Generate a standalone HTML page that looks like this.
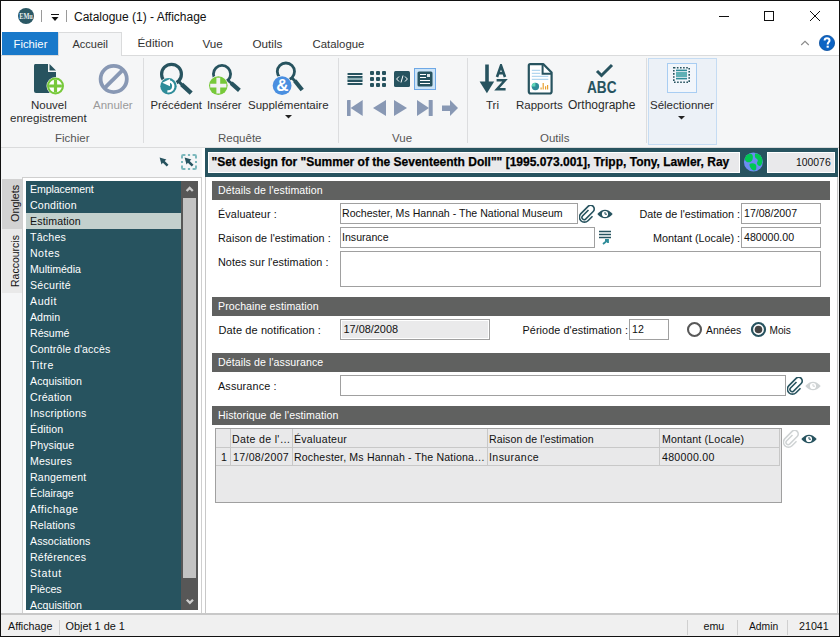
<!DOCTYPE html>
<html><head><meta charset="utf-8">
<style>
*{margin:0;padding:0;box-sizing:border-box}
html,body{width:840px;height:637px;overflow:hidden;background:#fff}
body{position:relative;font-family:"Liberation Sans",sans-serif;color:#000}
.a{position:absolute}
.t{position:absolute;white-space:nowrap;line-height:1}
</style></head><body>
<!-- window frame -->


<!-- title bar -->
<svg class="a" style="left:18px;top:8px" width="16" height="16" viewBox="0 0 16 16">
  <circle cx="8" cy="8" r="8" fill="#2b5865"/>
  <text x="1.2" y="11" textLength="13.6" lengthAdjust="spacingAndGlyphs" font-family="Liberation Serif" font-weight="bold" font-size="7.4" fill="#e8eef0">EMu</text>
</svg>
<div class="a" style="left:41px;top:10px;width:1px;height:12px;background:#9a9a9a"></div>
<div class="a" style="left:51px;top:14px;width:8px;height:1px;background:#111"></div>
<svg class="a" style="left:51px;top:17px" width="8" height="5"><path d="M0.5 0H7.5L4 4Z" fill="#111"/></svg>
<div class="a" style="left:66px;top:10px;width:1px;height:12px;background:#9a9a9a"></div>
<div class="t" style="left:74px;top:11px;font-size:12px;color:#111">Catalogue (1) - Affichage</div>
<!-- window controls -->
<div class="a" style="left:719px;top:16px;width:10px;height:1px;background:#111"></div>
<div class="a" style="left:764px;top:11px;width:10px;height:10px;border:1px solid #111"></div>
<svg class="a" style="left:809px;top:10px" width="12" height="12"><path d="M1 1L11 11M11 1L1 11" stroke="#111" stroke-width="1"/></svg>

<!-- ribbon tabs -->
<div class="a" style="left:2px;top:32px;width:56px;height:23px;background:#1979ca"></div>
<div class="t" style="left:13.5px;top:39px;font-size:11.3px;color:#fff">Fichier</div>
<div class="a" style="left:58px;top:32px;width:64px;height:24px;background:#f5f6f7;border:1px solid #dadbdc;border-bottom:none"></div>
<div class="a" style="left:1px;top:55px;width:838px;height:1px;background:#dadbdc"></div>
<div class="a" style="left:59px;top:55px;width:62px;height:1px;background:#f5f6f7"></div>
<div class="t" style="left:72.5px;top:39px;font-size:11px;color:#333">Accueil</div>
<div class="t" style="left:137.5px;top:38px;font-size:11.8px;color:#333">Édition</div>
<div class="t" style="left:202.5px;top:38px;font-size:11.7px;color:#333">Vue</div>
<div class="t" style="left:252.5px;top:38px;font-size:11.7px;color:#333">Outils</div>
<div class="t" style="left:312.5px;top:39px;font-size:11.4px;color:#333">Catalogue</div>
<svg class="a" style="left:800px;top:39px" width="11" height="8"><path d="M1.2 6L5 2.3L8.8 6" stroke="#8a8a8a" stroke-width="1.1" fill="none"/></svg>
<svg class="a" style="left:819px;top:35px" width="16" height="16" viewBox="0 0 16 16">
  <circle cx="8" cy="8" r="7.6" fill="#0d64c4" stroke="#0a4f9e" stroke-width="0.8"/>
  <path d="M5.6 5.6C5.6 4 6.6 3.2 8 3.2C9.5 3.2 10.5 4.1 10.5 5.4C10.5 6.9 8.8 7.2 8.7 9V9.4" fill="none" stroke="#fff" stroke-width="2"/>
  <rect x="7.6" y="10.7" width="2.2" height="2" fill="#fff"/>
</svg>

<!-- ribbon body -->
<div class="a" style="left:1px;top:56px;width:838px;height:91px;background:#f5f6f7"></div>
<div class="a" style="left:1px;top:147px;width:838px;height:1px;background:#dadbdc"></div>


<!-- ===== RIBBON CONTENT ===== -->
<!-- Fichier group -->
<svg class="a" style="left:33px;top:63px" width="34" height="33" viewBox="0 0 34 33">
  <path d="M2 1H15V9H23V25A2 2 0 0 1 21 30H3A2 2 0 0 1 1 28V3A2 2 0 0 1 2 1Z" fill="#27535f"/>
  <path d="M16.5 1L23 7.5H16.5Z" fill="#27535f"/>
  <circle cx="22.5" cy="23" r="9" fill="#f5f6f7"/>
  <circle cx="22.5" cy="23" r="7.5" fill="#fff" stroke="#77c93a" stroke-width="2"/>
  <path d="M22.5 16.6V29.4M16.1 23H28.9" stroke="#77c93a" stroke-width="3.2"/>
</svg>
<div class="t" style="left:31px;top:100px;font-size:11.5px;color:#2b2b2b">Nouvel</div>
<div class="t" style="left:10px;top:113px;font-size:11.5px;color:#2b2b2b">enregistrement</div>
<svg class="a" style="left:98px;top:64px" width="32" height="32" viewBox="0 0 32 32">
  <circle cx="15.7" cy="15" r="13.1" fill="none" stroke="#8898b4" stroke-width="3.8"/>
  <path d="M24.6 6.1L6.8 23.9" stroke="#8898b4" stroke-width="3.8"/>
</svg>
<div class="t" style="left:93px;top:100px;font-size:11.5px;color:#9a9a9a">Annuler</div>
<div class="t" style="left:55px;top:133px;font-size:11.5px;color:#555">Fichier</div>
<div class="a" style="left:143px;top:58px;width:1px;height:85px;background:#dcdddf"></div>

<!-- Requete group -->
<svg class="a" style="left:158px;top:60px" width="36" height="36" viewBox="0 0 36 36">
  <circle cx="13.5" cy="14.2" r="9.9" fill="none" stroke="#27535f" stroke-width="3.2"/>
  <path d="M20.4 21.1L24 24.7" stroke="#27535f" stroke-width="3"/>
  <path d="M23.6 24.3L33.2 33.2" stroke="#27535f" stroke-width="4.4"/>
  <circle cx="10.5" cy="26.3" r="9" fill="#f5f6f7"/>
  <circle cx="10.5" cy="26.3" r="8.2" fill="#2e8c99"/>
  <path d="M11.2 21.4A4.9 4.9 0 1 1 9.4 31.2" fill="none" stroke="#fff" stroke-width="2.4"/>
  <path d="M4.3 22.8L12 19V26.2Z" fill="#fff"/>
</svg>
<div class="t" style="left:150.5px;top:100px;font-size:11.3px;color:#2b2b2b">Précédent</div>
<svg class="a" style="left:208px;top:60px" width="36" height="36" viewBox="0 0 36 36">
  <circle cx="14" cy="14" r="8.6" fill="none" stroke="#27535f" stroke-width="2.8"/>
  <path d="M19.8 20.2L24 23.8" stroke="#27535f" stroke-width="2.8"/>
  <path d="M23.2 23.2L31.4 30.4" stroke="#27535f" stroke-width="4.2"/>
  <circle cx="10.3" cy="25.6" r="10" fill="#f5f6f7"/>
  <circle cx="10.3" cy="25.6" r="9.3" fill="#77c93a"/>
  <path d="M2.2 25.6H18.4M10.3 17.7V33.6" stroke="#f2f2f2" stroke-width="3.8"/>
</svg>
<div class="t" style="left:207px;top:100px;font-size:11.1px;color:#2b2b2b">Insérer</div>
<svg class="a" style="left:270px;top:60px" width="36" height="36" viewBox="0 0 36 36">
  <circle cx="15.9" cy="11.6" r="8.6" fill="none" stroke="#27535f" stroke-width="2.8"/>
  <path d="M21.8 17.8L25.5 21.5" stroke="#27535f" stroke-width="2.8"/>
  <path d="M24.8 20.8L32.2 30" stroke="#27535f" stroke-width="4.2"/>
  <circle cx="12.1" cy="25.7" r="10.1" fill="#f5f6f7"/>
  <circle cx="12.1" cy="25.7" r="9.4" fill="#4a8fe0"/>
  <text x="12.3" y="31.4" text-anchor="middle" font-family="Liberation Sans" font-weight="bold" font-size="17" fill="#fff">&amp;</text>
</svg>
<div class="t" style="left:248px;top:100px;font-size:11.5px;color:#2b2b2b">Supplémentaire</div>
<svg class="a" style="left:285px;top:115px" width="7" height="4"><path d="M0 0H7L3.5 3.5Z" fill="#222"/></svg>
<div class="t" style="left:218px;top:133px;font-size:11.5px;color:#555">Requête</div>
<div class="a" style="left:338px;top:58px;width:1px;height:85px;background:#dcdddf"></div>

<!-- Vue group -->
<svg class="a" style="left:347px;top:72px" width="16" height="14" viewBox="0 0 16 14">
  <rect x="0.3" y="0.9" width="15.4" height="2" rx="1" fill="#27535f"/>
  <rect x="0.3" y="3.9" width="15.4" height="2" rx="0.8" fill="#27535f"/>
  <rect x="0.3" y="5.9" width="15.4" height="2.4" fill="#8fb0b5"/>
  <rect x="0.3" y="8" width="15.4" height="2" rx="0.8" fill="#27535f"/>
  <rect x="0.3" y="11" width="15.4" height="2" rx="1" fill="#27535f"/>
</svg>
<svg class="a" style="left:370px;top:71px" width="16" height="16" viewBox="0 0 16 16">
  <g fill="#27535f">
  <rect x="0" y="0" width="4" height="4" rx="1"/><rect x="6" y="0" width="4" height="4" rx="1"/><rect x="12" y="0" width="4" height="4" rx="1"/>
  <rect x="0" y="6" width="4" height="4" rx="1"/><rect x="6" y="6" width="4" height="4" rx="1"/><rect x="12" y="6" width="4" height="4" rx="1"/>
  <rect x="0" y="12" width="4" height="4" rx="1"/><rect x="6" y="12" width="4" height="4" rx="1"/><rect x="12" y="12" width="4" height="4" rx="1"/>
  </g>
</svg>
<svg class="a" style="left:394px;top:71px" width="16" height="16" viewBox="0 0 16 16">
  <rect x="0" y="0" width="16" height="16" rx="1.5" fill="#27535f"/>
  <path d="M5 5.5L2.6 8L5 10.5M11 5.5L13.4 8L11 10.5M9 4.5L7 11.5" stroke="#fff" stroke-width="1" fill="none"/>
</svg>
<div class="a" style="left:414px;top:68px;width:22px;height:22px;background:#cce4f7;border:1px solid #6ea8e6"></div>
<svg class="a" style="left:417px;top:71px" width="16" height="16" viewBox="0 0 16 16">
  <rect x="0.5" y="0.5" width="15" height="15" rx="1.5" fill="#27535f"/>
  <path d="M3 3.5H9M3 6.5H9M3 9.5H13M3 12.5H13" stroke="#fff" stroke-width="1"/>
  <rect x="10" y="3" width="3" height="3" fill="#fff" opacity="0.85"/>
</svg>
<svg class="a" style="left:347px;top:100px" width="112" height="16" viewBox="0 0 112 16">
  <g fill="#8898b4">
  <rect x="0" y="0" width="3.6" height="16" rx="0.5"/><path d="M3.6 8L15.7 0V16Z"/>
  <path d="M26 8L39 0V16Z"/>
  <path d="M47 0L60 8L47 16Z"/>
  <path d="M70 0L82 8L70 16Z"/><rect x="81.7" y="0" width="4" height="16" rx="0.5"/>
  <path d="M95 5.4H103V0L111 8L103 16V11.1H95Z"/>
  </g>
</svg>
<div class="t" style="left:392px;top:133px;font-size:11.5px;color:#555">Vue</div>
<div class="a" style="left:467px;top:58px;width:1px;height:85px;background:#dcdddf"></div>

<!-- Outils group -->
<svg class="a" style="left:479px;top:64px" width="29" height="30" viewBox="0 0 29 30">
  <path d="M8 0.5V18" stroke="#27535f" stroke-width="3.6"/>
  <path d="M0.6 17.6H15.2L7.9 29.2Z" fill="#27535f"/>
  <path d="M18 13L22 1.6L26 13M19.5 9.2H24.5" stroke="#27535f" stroke-width="2.6" fill="none"/>
  <path d="M17.6 16.3H26L18 25.2H26.6" stroke="#27535f" stroke-width="2.5" fill="none" stroke-linejoin="miter"/>
</svg>
<div class="t" style="left:486px;top:100px;font-size:11.5px;color:#2b2b2b">Tri</div>
<svg class="a" style="left:527px;top:63px" width="27" height="33" viewBox="0 0 27 33">
  <path d="M3.2 1.1H16.2L24.6 9.6V28.5A2 2 0 0 1 22.6 30.5H3.8A2 2 0 0 1 1.8 28.5V2.5A1.4 1.4 0 0 1 3.2 1.1Z" fill="#fff" stroke="#27535f" stroke-width="2.2" stroke-linejoin="round"/>
  <path d="M15.6 1.1V10.7H24.6" fill="none" stroke="#27535f" stroke-width="2"/>
  <path d="M4.8 7.4H13.2M4.8 10.4H13.2M4.8 13.4H21.3M4.8 16.4H21.3" stroke="#b3d7ef" stroke-width="1.1"/>
  <circle cx="8.4" cy="23.5" r="3.7" fill="#2e8c99"/>
  <path d="M8.4 23.5V19.8A3.7 3.7 0 0 0 4.7 23.5Z" fill="#5fd6b8"/>
  <path d="M14.1 26.6V24.4M16.2 26.6V20M18.6 26.6V23.3M20.6 26.6V22" stroke="#e8a030" stroke-width="1.2"/>
</svg>
<div class="t" style="left:516px;top:100px;font-size:11.5px;color:#2b2b2b">Rapports</div>
<svg class="a" style="left:586px;top:63px" width="32" height="31" viewBox="0 0 32 31">
  <path d="M11 8L15.5 12.5L26 2" stroke="#27535f" stroke-width="3" fill="none"/>
  <text x="1" y="29.6" textLength="29.5" lengthAdjust="spacingAndGlyphs" font-family="Liberation Sans" font-weight="bold" font-size="15.6" fill="#27535f">ABC</text>
</svg>
<div class="t" style="left:568px;top:99px;font-size:12px;color:#2b2b2b">Orthographe</div>
<div class="t" style="left:540px;top:133px;font-size:11.5px;color:#555">Outils</div>
<div class="a" style="left:646px;top:58px;width:1px;height:85px;background:#dcdddf"></div>

<!-- Selectionner -->
<div class="a" style="left:648px;top:58px;width:69px;height:87px;background:#ecf1f7;border:1px solid #c5dcf3"></div>
<div class="a" style="left:667px;top:63px;width:30px;height:30px;background:#f2f6fb;border:1px solid #a8cdf2"></div>
<svg class="a" style="left:672px;top:66px" width="20" height="18" viewBox="0 0 20 18">
  <rect x="1.8" y="1.8" width="15.4" height="14.4" fill="none" stroke="#27535f" stroke-width="1.6" stroke-dasharray="1.6 1.5"/>
  <rect x="4" y="3.6" width="11" height="1.6" fill="#2e8c99"/>
  <rect x="4" y="6" width="11" height="5" fill="#5fb0b5"/>
  <rect x="4" y="11.8" width="11" height="1.6" fill="#2e8c99"/>
</svg>
<div class="t" style="left:650px;top:100px;font-size:11.5px;color:#2b2b2b">Sélectionner</div>
<svg class="a" style="left:678px;top:116px" width="7" height="4"><path d="M0 0H7L3.5 3.5Z" fill="#222"/></svg>


<!-- ===== LOWER AREA ===== -->
<div class="a" style="left:1px;top:148px;width:204px;height:466px;background:#f5f6f7"></div>
<!-- arrow icons -->
<svg class="a" style="left:159px;top:157px" width="10" height="10" viewBox="0 0 10 10">
  <path d="M0.6 0.6L7.4 2.5L5.7 3.9L9.5 7.7L7.7 9.5L3.9 5.7L2.5 7.4Z" fill="#27535f"/>
</svg>
<svg class="a" style="left:181px;top:154px" width="17" height="17" viewBox="0 0 17 17">
  <path d="M1 4.4V2.2Q1 1 2.2 1H4.4M11.6 1H13.8Q15 1 15 2.2V4.4M15 11.6V13.8Q15 15 13.8 15H11.6M4.4 15H2.2Q1 15 1 13.8V11.6M6.9 1H9.1M6.9 15H9.1M1 6.9V9.1M15 6.9V9.1" fill="none" stroke="#7cb8bc" stroke-width="2"/>
</svg>
<svg class="a" style="left:184px;top:157px" width="10" height="10" viewBox="0 0 10 10">
  <path d="M0.6 0.6L7.4 2.5L5.7 3.9L9.5 7.7L7.7 9.5L3.9 5.7L2.5 7.4Z" fill="#27535f"/>
</svg>
<!-- vertical tabs -->
<div class="a" style="left:2px;top:179px;width:20px;height:50px;background:#d2d2d2"></div>
<div class="a" style="left:2px;top:229px;width:20px;height:64px;background:#e9e9e9"></div>
<div class="t" style="left:10px;top:222px;font-size:10.8px;color:#111;transform:rotate(-90deg);transform-origin:0 0">Onglets</div>
<div class="t" style="left:10px;top:287px;font-size:10.5px;color:#111;transform:rotate(-90deg);transform-origin:0 0">Raccourcis</div>
<!-- list panel -->
<div class="a" style="left:22px;top:177px;width:180px;height:437px;background:#fff;border:1px solid #cfcfcf;border-bottom:none"></div>
<div class="a" style="left:26px;top:181px;width:155px;height:429px;background:#27535f;overflow:hidden"></div>
<div class="t" style="left:30px;top:184px;font-size:10.6px;color:#fff;letter-spacing:-0.11px">Emplacement</div>
<div class="t" style="left:30px;top:200px;font-size:10.6px;color:#fff;letter-spacing:0.22px">Condition</div>
<div class="a" style="left:26px;top:213px;width:155px;height:16px;background:#c3d0cd"></div>
<div class="t" style="left:30px;top:216px;font-size:10.6px;color:#111;letter-spacing:0.14px">Estimation</div>
<div class="t" style="left:30px;top:232px;font-size:10.6px;color:#fff;letter-spacing:0.22px">Tâches</div>
<div class="t" style="left:30px;top:248px;font-size:10.6px;color:#fff;letter-spacing:0.47px">Notes</div>
<div class="t" style="left:30px;top:264px;font-size:10.6px;color:#fff;letter-spacing:-0.03px">Multimédia</div>
<div class="t" style="left:30px;top:280px;font-size:10.6px;color:#fff;letter-spacing:0.26px">Sécurité</div>
<div class="t" style="left:30px;top:296px;font-size:10.6px;color:#fff;letter-spacing:0.57px">Audit</div>
<div class="t" style="left:30px;top:312px;font-size:10.6px;color:#fff;letter-spacing:0.00px">Admin</div>
<div class="t" style="left:30px;top:328px;font-size:10.6px;color:#fff;letter-spacing:-0.02px">Résumé</div>
<div class="t" style="left:30px;top:344px;font-size:10.6px;color:#fff;letter-spacing:0.11px">Contrôle d'accès</div>
<div class="t" style="left:30px;top:360px;font-size:10.6px;color:#fff;letter-spacing:0.62px">Titre</div>
<div class="t" style="left:30px;top:376px;font-size:10.6px;color:#fff;letter-spacing:0.07px">Acquisition</div>
<div class="t" style="left:30px;top:392px;font-size:10.6px;color:#fff;letter-spacing:0.24px">Création</div>
<div class="t" style="left:30px;top:408px;font-size:10.6px;color:#fff;letter-spacing:0.25px">Inscriptions</div>
<div class="t" style="left:30px;top:424px;font-size:10.6px;color:#fff;letter-spacing:0.12px">Édition</div>
<div class="t" style="left:30px;top:440px;font-size:10.6px;color:#fff;letter-spacing:0.09px">Physique</div>
<div class="t" style="left:30px;top:456px;font-size:10.6px;color:#fff;letter-spacing:0.18px">Mesures</div>
<div class="t" style="left:30px;top:472px;font-size:10.6px;color:#fff;letter-spacing:0.18px">Rangement</div>
<div class="t" style="left:30px;top:488px;font-size:10.6px;color:#fff;letter-spacing:-0.05px">Éclairage</div>
<div class="t" style="left:30px;top:504px;font-size:10.6px;color:#fff;letter-spacing:0.50px">Affichage</div>
<div class="t" style="left:30px;top:520px;font-size:10.6px;color:#fff;letter-spacing:0.11px">Relations</div>
<div class="t" style="left:30px;top:536px;font-size:10.6px;color:#fff;letter-spacing:0.07px">Associations</div>
<div class="t" style="left:30px;top:552px;font-size:10.6px;color:#fff;letter-spacing:0.20px">Références</div>
<div class="t" style="left:30px;top:568px;font-size:10.6px;color:#fff;letter-spacing:0.70px">Statut</div>
<div class="t" style="left:30px;top:584px;font-size:10.6px;color:#fff;letter-spacing:-0.04px">Pièces</div>
<div class="t" style="left:30px;top:600px;font-size:10.6px;color:#fff;letter-spacing:0.07px">Acquisition</div>
<div class="a" style="left:26px;top:610px;width:172px;height:4px;background:#fff"></div>
<div class="a" style="left:181px;top:181px;width:17px;height:429px;background:#575757"></div>
<div class="a" style="left:183px;top:198px;width:13px;height:380px;background:#c3c3c3"></div>
<svg class="a" style="left:185px;top:185px" width="10" height="9"><path d="M1.6 6L4.7 2.9L7.8 6" stroke="#cdcdcd" stroke-width="2.3" fill="none"/></svg>
<svg class="a" style="left:185px;top:597px" width="10" height="9"><path d="M1.8 2.8L4.9 5.9L8 2.8" stroke="#cdcdcd" stroke-width="2.3" fill="none"/></svg>

<!-- main form -->
<div class="a" style="left:202px;top:148px;width:3px;height:466px;background:#fff"></div>
<div class="a" style="left:205px;top:148px;width:634px;height:466px;background:#f5f6f7"></div>
<div class="a" style="left:205px;top:177px;width:633px;height:437px;background:#fff;border-left:1px solid #c8c8c8;border-right:1px solid #c8c8c8"></div>
<!-- record title bar -->
<div class="a" style="left:205px;top:148px;width:633px;height:29px;background:#27535f"></div>
<div class="a" style="left:208px;top:152px;width:532px;height:21px;background:#e9e9eb;border:1.5px solid #fff"></div>
<div class="t" style="left:211.5px;top:155px;font:bold 12px 'Liberation Sans';color:#000;-webkit-text-stroke:0.25px #000">"Set design for "Summer of the Seventeenth Doll"" [1995.073.001], Tripp, Tony, Lawler, Ray</div>
<svg class="a" style="left:743px;top:152px" width="21" height="21" viewBox="0 0 21 21">
  <defs><clipPath id="gc"><circle cx="10.4" cy="10" r="9.5"/></clipPath></defs>
  <circle cx="10.4" cy="10" r="9.5" fill="#6b8cf2"/>
  <g clip-path="url(#gc)" fill="#00c853">
  <path d="M1.5 4C3 1.5 6 1 9 2.2C10.2 3.5 10 6 9.3 8C8.5 9.8 6.5 10.6 4.5 10.3C2.5 9.8 1.2 7.5 1.5 4Z"/>
  <path d="M12.2 1.5C15 1 18 2.5 19.5 5.5C20 8 19.5 11 18 13.5C16.5 14.5 14.5 13.5 14 11.5C13.8 10 15 9.3 14.8 8C14.3 6.8 12.5 6.5 12 5C11.7 3.8 11.8 2.5 12.2 1.5Z"/>
  <path d="M6.5 12C8.2 10.8 11 11 12.5 12.3C13.5 13.6 13.5 15.5 13 17.5C12.2 18.6 10.5 18.8 9.2 17.8C7.8 16.5 6.2 14.2 6.5 12Z"/>
  </g>
</svg>
<div class="a" style="left:767px;top:152px;width:68px;height:21px;background:#e9e9eb;border:1.5px solid #fff"></div>
<div class="t" style="left:796px;top:158px;font-size:10.4px;color:#111">100076</div>

<!-- Section 1 -->
<div class="a" style="left:212px;top:181px;width:618px;height:19px;background:#606160"></div>
<div class="t" style="left:218px;top:185px;font-size:10.6px;color:#fff;letter-spacing:0.09px">Détails de l'estimation</div>
<div class="t" style="left:218px;top:209px;font-size:10.8px;color:#111;letter-spacing:0.1px">Évaluateur :</div>
<div class="a" style="left:340px;top:203px;width:238px;height:21px;border:1px solid #a0a0a0"></div>
<div class="t" style="left:342px;top:208px;font-size:10.6px;color:#111">Rochester, Ms Hannah - The National Museum</div>
<svg class="a" style="left:579px;top:205px" width="18" height="18" viewBox="0 0 18 18">
  <path d="M9.5 5L3.5 11A2.2 2.2 0 0 0 6.6 14.1L14.2 6.5A3.6 3.6 0 0 0 9.1 1.4L1.9 8.6A5 5 0 0 0 9 15.7L13.5 11.2" fill="none" stroke="#27535f" stroke-width="1.6"/>
</svg>
<svg class="a" style="left:597px;top:209px" width="16" height="10" viewBox="0 0 16 10">
  <path d="M0.3 5Q8 -3.6 15.7 5Q8 13.6 0.3 5Z" fill="#27535f"/><circle cx="8" cy="5" r="3.1" fill="#fff"/><path d="M8 3V5.2H10" fill="none" stroke="#27535f" stroke-width="1"/>
</svg>
<div class="t" style="left:639.5px;top:209px;font-size:10.8px;color:#111">Date de l'estimation :</div>
<div class="a" style="left:741px;top:203px;width:80px;height:21px;border:1px solid #a0a0a0"></div>
<div class="t" style="left:744px;top:208px;font-size:10.6px;color:#111">17/08/2007</div>

<div class="t" style="left:218px;top:233px;font-size:10.8px;color:#111;letter-spacing:0.06px">Raison de l'estimation :</div>
<div class="a" style="left:340px;top:227px;width:255px;height:21px;border:1px solid #a0a0a0"></div>
<div class="t" style="left:342px;top:232px;font-size:10.6px;color:#111">Insurance</div>
<svg class="a" style="left:598px;top:229px" width="15" height="17" viewBox="0 0 15 17">
  <path d="M1 2.5H13M1 5.5H13M1 8.5H13" stroke="#27535f" stroke-width="1.5"/>
  <path d="M5 15L10 11M7 11H10V14" stroke="#2e8c99" stroke-width="1.8" fill="none"/>
</svg>
<div class="t" style="left:653px;top:233px;font-size:10.8px;color:#111">Montant (Locale) :</div>
<div class="a" style="left:741px;top:227px;width:80px;height:21px;border:1px solid #a0a0a0"></div>
<div class="t" style="left:744px;top:232px;font-size:10.6px;color:#111">480000.00</div>

<div class="t" style="left:218px;top:257px;font-size:10.8px;color:#111;letter-spacing:0.07px">Notes sur l'estimation :</div>
<div class="a" style="left:340px;top:251px;width:481px;height:36px;border:1px solid #a0a0a0"></div>

<!-- Section 2 -->
<div class="a" style="left:212px;top:297px;width:618px;height:19px;background:#606160"></div>
<div class="t" style="left:218px;top:301px;font-size:10.6px;color:#fff;letter-spacing:0.09px">Prochaine estimation</div>
<div class="t" style="left:218.5px;top:325px;font-size:11px;color:#111;letter-spacing:0.1px">Date de notification :</div>
<div class="a" style="left:340px;top:319px;width:150px;height:21px;border:1px solid #a0a0a0;background:#eaeaeb;box-shadow:inset 0 0 0 1px #fff"></div>
<div class="t" style="left:343.5px;top:324px;font-size:10.9px;color:#111">17/08/2008</div>
<div class="t" style="left:522.5px;top:325px;font-size:10.8px;color:#111;letter-spacing:0.09px">Période d'estimation :</div>
<div class="a" style="left:629px;top:319px;width:40px;height:21px;border:1px solid #a0a0a0"></div>
<div class="t" style="left:632px;top:324px;font-size:10.6px;color:#111">12</div>
<svg class="a" style="left:686px;top:321px" width="17" height="17" viewBox="0 0 17 17">
  <circle cx="8.5" cy="8.5" r="6.5" fill="#fff" stroke="#585858" stroke-width="2.1"/>
</svg>
<div class="t" style="left:706px;top:326px;font-size:10.4px;color:#111">Années</div>
<svg class="a" style="left:750px;top:321px" width="17" height="17" viewBox="0 0 17 17">
  <circle cx="8.5" cy="8.5" r="6.5" fill="#fff" stroke="#27535f" stroke-width="2.2"/>
  <circle cx="8.5" cy="8.5" r="3.8" fill="#444"/>
</svg>
<div class="t" style="left:769.5px;top:326px;font-size:10.1px;color:#111">Mois</div>

<!-- Section 3 -->
<div class="a" style="left:212px;top:353px;width:618px;height:19px;background:#606160"></div>
<div class="t" style="left:218px;top:357px;font-size:10.6px;color:#fff;letter-spacing:0.09px">Détails de l'assurance</div>
<div class="t" style="left:218px;top:381px;font-size:10.8px;color:#111;letter-spacing:0.15px">Assurance :</div>
<div class="a" style="left:340px;top:375px;width:446px;height:21px;border:1px solid #a0a0a0"></div>
<svg class="a" style="left:787px;top:377px" width="18" height="18" viewBox="0 0 18 18">
  <path d="M9.5 5L3.5 11A2.2 2.2 0 0 0 6.6 14.1L14.2 6.5A3.6 3.6 0 0 0 9.1 1.4L1.9 8.6A5 5 0 0 0 9 15.7L13.5 11.2" fill="none" stroke="#27535f" stroke-width="1.6"/>
</svg>
<svg class="a" style="left:805px;top:381px" width="16" height="10" viewBox="0 0 16 10">
  <path d="M0.3 5Q8 -3.6 15.7 5Q8 13.6 0.3 5Z" fill="#cfd3d4"/><circle cx="8" cy="5" r="3.1" fill="#fff"/><path d="M8 3V5.2H10" fill="none" stroke="#cfd3d4" stroke-width="1"/>
</svg>

<!-- Section 4 -->
<div class="a" style="left:212px;top:406px;width:618px;height:19px;background:#606160"></div>
<div class="t" style="left:218px;top:410px;font-size:10.6px;color:#fff;letter-spacing:0.09px">Historique de l'estimation</div>
<div class="a" style="left:215px;top:428px;width:567px;height:75px;border:1px solid #a0a0a0;background:#e9e9ea"></div>
<!-- grid lines -->
<div class="a" style="left:216px;top:447px;width:564px;height:1px;background:#c8c8c8"></div>
<div class="a" style="left:216px;top:465px;width:564px;height:1px;background:#c8c8c8"></div>
<div class="a" style="left:230px;top:429px;width:1px;height:37px;background:#c8c8c8"></div>
<div class="a" style="left:292px;top:429px;width:1px;height:37px;background:#c8c8c8"></div>
<div class="a" style="left:487px;top:429px;width:1px;height:37px;background:#c8c8c8"></div>
<div class="a" style="left:659px;top:429px;width:1px;height:37px;background:#c8c8c8"></div>
<div class="a" style="left:779px;top:429px;width:1px;height:37px;background:#c8c8c8"></div>
<div class="t" style="left:232px;top:434px;font-size:10.6px;color:#111;letter-spacing:0.33px">Date de l'…</div>
<div class="t" style="left:294px;top:434px;font-size:10.6px;color:#111;letter-spacing:0.25px">Évaluateur</div>
<div class="t" style="left:489px;top:434px;font-size:10.6px;color:#111;letter-spacing:0.06px">Raison de l'estimation</div>
<div class="t" style="left:662px;top:434px;font-size:10.6px;color:#111;letter-spacing:0.17px">Montant (Locale)</div>
<div class="t" style="left:221px;top:452px;font-size:10.6px;color:#111">1</div>
<div class="t" style="left:233px;top:452px;font-size:10.6px;color:#111;letter-spacing:0.3px">17/08/2007</div>
<div class="t" style="left:294px;top:452px;font-size:10.6px;color:#111;letter-spacing:0.16px">Rochester, Ms Hannah - The Nationa…</div>
<div class="t" style="left:489px;top:452px;font-size:10.6px;color:#111;letter-spacing:0.4px">Insurance</div>
<div class="t" style="left:662px;top:452px;font-size:10.6px;color:#111;letter-spacing:0.29px">480000.00</div>
<svg class="a" style="left:783px;top:430px" width="18" height="18" viewBox="0 0 18 18">
  <path d="M9.5 5L3.5 11A2.2 2.2 0 0 0 6.6 14.1L14.2 6.5A3.6 3.6 0 0 0 9.1 1.4L1.9 8.6A5 5 0 0 0 9 15.7L13.5 11.2" fill="none" stroke="#cfd3d4" stroke-width="1.5"/>
</svg>
<svg class="a" style="left:801px;top:434px" width="16" height="10" viewBox="0 0 16 10">
  <path d="M0.3 5Q8 -3.6 15.7 5Q8 13.6 0.3 5Z" fill="#27535f"/><circle cx="8" cy="5" r="3.1" fill="#fff"/><path d="M8 3V5.2H10" fill="none" stroke="#27535f" stroke-width="1"/>
</svg>

<!-- status bar -->
<div class="a" style="left:1px;top:613px;width:838px;height:2px;background:#c8c8c8"></div>
<div class="a" style="left:1px;top:615px;width:838px;height:21px;background:#f0f0f0"></div>
<div class="t" style="left:8px;top:621px;font-size:10.7px;color:#111">Affichage</div>
<div class="a" style="left:59px;top:620px;width:1px;height:15px;background:#d0d0d0"></div>
<div class="t" style="left:65.5px;top:621px;font-size:10.9px;color:#111">Objet 1 de 1</div>
<div class="a" style="left:687px;top:620px;width:1px;height:15px;background:#d0d0d0"></div>
<div class="t" style="left:703.5px;top:621px;font-size:10.7px;color:#111">emu</div>
<div class="a" style="left:737px;top:620px;width:1px;height:15px;background:#d0d0d0"></div>
<div class="t" style="left:749px;top:622px;font-size:10.3px;color:#111">Admin</div>
<div class="a" style="left:787px;top:620px;width:1px;height:15px;background:#d0d0d0"></div>
<div class="t" style="left:799px;top:621px;font-size:10.7px;color:#111">21041</div>

<div class="a" style="left:0;top:0;width:840px;height:637px;border:1px solid #111"></div>
</body></html>
